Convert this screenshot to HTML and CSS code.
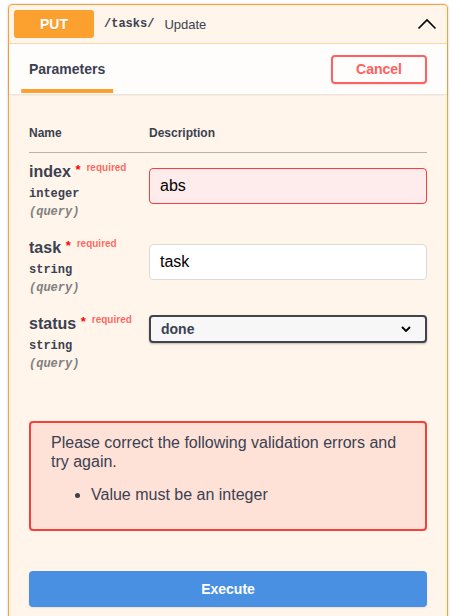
FILE: index.html
```html
<!DOCTYPE html>
<html lang="en">
<head>
    <meta charset="UTF-8">
    <meta name="viewport" content="width=device-width, initial-scale=1.0">
    <title>PUT /tasks/</title>
    <link rel="stylesheet" href="styles.css">
</head>
<body>

    <div class="opblock opblock-put">
        <div class="opblock-summary">
            <span class="method">PUT</span>
            <span class="path">/tasks/</span>
            <span class="summary-desc">Update</span>
            <svg class="arrow" width="20" height="20" viewBox="0 0 20 20">
                <polyline points="1.5,14.5 10,6 18.5,14.5" fill="none" stroke="#000" stroke-width="1.6"/>
            </svg>
        </div>

        <div class="section-header">
            <div class="tab-item"><h4><span>Parameters</span></h4></div>
            <button class="btn cancel">Cancel</button>
        </div>

        <div class="params-wrapper">
            <table class="parameters">
                <thead>
                    <tr>
                        <th class="col-name">Name</th>
                        <th>Description</th>
                    </tr>
                </thead>
                <tbody>
                    <tr>
                        <td class="col-name">
                            <div class="param-name">index<span class="star">&nbsp;*</span><span class="req">required</span></div>
                            <div class="param-type">integer</div>
                            <div class="param-in">(query)</div>
                        </td>
                        <td class="col-desc">
                            <input class="param-input invalid" type="text" value="abs">
                        </td>
                    </tr>
                    <tr>
                        <td class="col-name">
                            <div class="param-name">task<span class="star">&nbsp;*</span><span class="req">required</span></div>
                            <div class="param-type">string</div>
                            <div class="param-in">(query)</div>
                        </td>
                        <td class="col-desc">
                            <input class="param-input" type="text" value="task">
                        </td>
                    </tr>
                    <tr>
                        <td class="col-name">
                            <div class="param-name">status<span class="star">&nbsp;*</span><span class="req">required</span></div>
                            <div class="param-type">string</div>
                            <div class="param-in">(query)</div>
                        </td>
                        <td class="col-desc">
                            <div class="select-wrap">
                                <select class="param-select">
                                    <option>done</option>
                                    <option>todo</option>
                                </select>
                                <svg class="select-arrow" width="10" height="6" viewBox="0 0 10 6">
                                    <polyline points="1,1 5,5 9,1" fill="none" stroke="#000" stroke-width="1.8"/>
                                </svg>
                            </div>
                        </td>
                    </tr>
                </tbody>
            </table>
        </div>

        <div class="validation-errors">
            Please correct the following validation errors and try again.
            <ul>
                <li>Value must be an integer</li>
            </ul>
        </div>

        <div class="execute-wrapper">
            <button class="btn execute">Execute</button>
        </div>
    </div>

</body>
</html>
```

FILE: styles.css
```css
body {
    font-family: 'Liberation Sans', Arial, sans-serif;
    background-color: #ffffff;
    color: #3b4151;
    margin: 0;
    padding: 4px 10px 0 8px;
}
.opblock {
    border: 1px solid #fca130;
    border-radius: 4px;
    background: rgba(252, 161, 48, 0.1);
    box-shadow: 0 0 3px rgba(0, 0, 0, 0.19);
}
.opblock-summary {
    display: flex;
    align-items: center;
    padding: 5px;
    border-bottom: 1px solid rgba(252, 161, 48, 0.35);
}
.method {
    background: #fca130;
    color: #fff;
    font-size: 14px;
    font-weight: 700;
    min-width: 80px;
    padding: 6px 0;
    text-align: center;
    border-radius: 3px;
    text-shadow: 0 1px 0 rgba(0, 0, 0, 0.1);
    line-height: 16px;
}
.path {
    font-family: 'Liberation Mono', 'Courier New', monospace;
    font-weight: 700;
    font-size: 12px;
    padding: 0 10px;
}
.summary-desc {
    font-size: 13px;
    flex: 1;
}
.arrow {
    margin-right: 5px;
}
.section-header {
    display: flex;
    align-items: center;
    justify-content: space-between;
    min-height: 50px;
    box-sizing: border-box;
    padding: 8px 20px;
    background: rgba(255, 255, 255, 0.8);
    box-shadow: 0 1px 2px rgba(0, 0, 0, 0.1);
}
.tab-item h4 {
    margin: 0;
    font-size: 14px;
    font-weight: 700;
}
.tab-item span {
    position: relative;
}
.tab-item span:after {
    content: '';
    position: absolute;
    left: 50%;
    bottom: -16px;
    width: 120%;
    height: 4px;
    background: #fca130;
    transform: translateX(-50%);
}
.btn {
    font-family: inherit;
    font-size: 14px;
    font-weight: 700;
    padding: 5px 23px;
    border: 2px solid gray;
    border-radius: 4px;
    background: transparent;
    box-shadow: 0 1px 2px rgba(0, 0, 0, 0.1);
    cursor: pointer;
    line-height: 15px;
}
.btn.cancel {
    border-color: #ff6060;
    color: #ff6060;
}
.params-wrapper {
    padding: 20px;
}
.parameters {
    width: 100%;
    border-collapse: collapse;
}
.parameters th {
    font-size: 12px;
    font-weight: 700;
    text-align: left;
    padding: 12px 0;
    border-bottom: 1px solid rgba(59, 65, 81, 0.2);
}
.col-name {
    width: 120px;
}
.parameters td {
    padding: 10px 0;
    vertical-align: top;
}
.param-name {
    font-size: 16px;
    font-weight: 700;
    line-height: 18px;
    height: 19px;
}
.star {
    color: red;
    font-size: 13px;
    line-height: 0;
    position: relative;
    top: -3px;
    padding-left: 1px;
}
.req {
    color: rgba(255, 0, 0, 0.6);
    font-size: 10px;
    line-height: 0;
    padding: 5px 5px 5px 6px;
    position: relative;
    top: -6px;
}
.param-type {
    font-family: 'Liberation Mono', 'Courier New', monospace;
    font-size: 12px;
    font-weight: 700;
    padding: 5px 0 4px;
    line-height: 14px;
}
.param-in {
    font-family: 'Liberation Mono', 'Courier New', monospace;
    font-size: 12px;
    font-weight: 700;
    font-style: italic;
    color: gray;
    line-height: 14px;
}
.param-input {
    display: block;
    width: 100%;
    box-sizing: border-box;
    margin: 5px 0;
    padding: 8px 10px;
    border: 1px solid #d9d9d9;
    border-radius: 4px;
    background: #fff;
    font-family: inherit;
    font-size: 16px;
    line-height: 18px;
    color: #000;
}
.param-input.invalid {
    border-color: #f93e3e;
    background: #feebeb;
}
.select-wrap {
    position: relative;
}
.param-select {
    display: block;
    width: 100%;
    height: 28px;
    box-sizing: border-box;
    padding: 3px 40px 3px 10px;
    border: 2px solid #41444e;
    border-radius: 4px;
    background: #f7f7f7;
    box-shadow: 0 1px 2px 0 rgba(0, 0, 0, 0.25);
    font-family: inherit;
    font-size: 14px;
    font-weight: 700;
    color: #3b4151;
    appearance: none;
    -webkit-appearance: none;
}
.select-arrow {
    position: absolute;
    right: 16px;
    top: 11px;
    pointer-events: none;
}
.validation-errors {
    margin: 20px;
    padding: 10px 20px;
    border: 2px solid #f93e3e;
    border-radius: 4px;
    background: rgba(249, 62, 62, 0.1);
    font-size: 16px;
    line-height: 19px;
}
.validation-errors ul {
    margin: 14px 0 15px;
    padding-left: 40px;
}
.execute-wrapper {
    padding: 20px;
}
.btn.execute {
    display: block;
    width: 100%;
    background: #4990e2;
    border-color: #4990e2;
    color: #fff;
    padding: 8px 40px;
    line-height: 16px;
}
```
